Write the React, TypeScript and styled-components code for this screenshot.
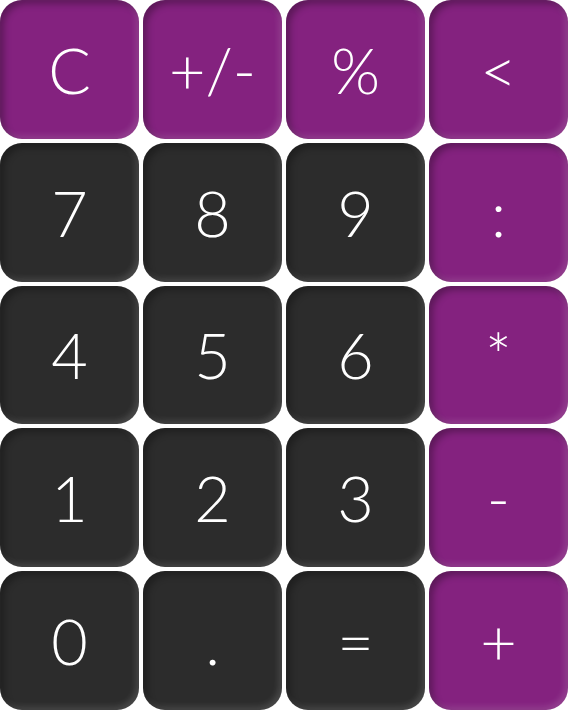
import React from "react";
import styled, { createGlobalStyle } from "styled-components";

const Global = createGlobalStyle`
  html, body { margin: 0; padding: 0; background: #ffffff; }
  body { font-family: "Lato", "Liberation Sans", sans-serif; }
`;

const Pad = styled.div`
  width: 568px;
  height: 710px;
  display: grid;
  grid-template-columns: repeat(4, 1fr);
  grid-template-rows: repeat(5, 1fr);
  gap: 4px;
`;

const Key = styled.button<{ $op?: boolean }>`
  border: none;
  margin: 0;
  padding: 0;
  border-radius: 22px;
  background: ${(p) => (p.$op ? "#84227f" : "#2c2c2c")};
  color: #ffffff;
  font-family: "Lato", "Liberation Sans", sans-serif;
  font-weight: 300;
  font-size: 63px;
  display: flex;
  align-items: center;
  justify-content: center;
  box-shadow: inset 4px 4px 7px rgba(0, 0, 0, 0.3),
    inset -3px -3px 6px rgba(255, 255, 255, 0.14);
  cursor: pointer;
`;

const keys: { label: string; op?: boolean }[] = [
  { label: "C", op: true },
  { label: "+/-", op: true },
  { label: "%", op: true },
  { label: "<", op: true },
  { label: "7" },
  { label: "8" },
  { label: "9" },
  { label: ":", op: true },
  { label: "4" },
  { label: "5" },
  { label: "6" },
  { label: "*", op: true },
  { label: "1" },
  { label: "2" },
  { label: "3" },
  { label: "-", op: true },
  { label: "0" },
  { label: "." },
  { label: "=" },
  { label: "+", op: true },
];

export default function App() {
  return (
    <>
      <Global />
      <Pad>
        {keys.map((k) => (
          <Key key={k.label} $op={k.op}>
            {k.label}
          </Key>
        ))}
      </Pad>
    </>
  );
}
